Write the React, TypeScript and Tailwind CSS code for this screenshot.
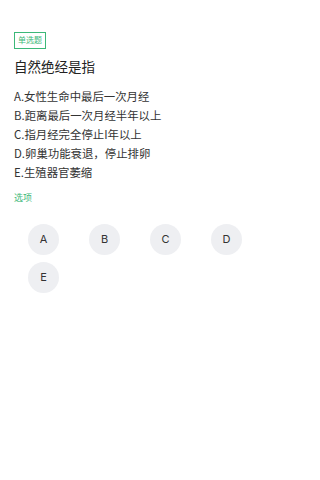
const options = [
  "A.女性生命中最后一次月经",
  "B.距离最后一次月经半年以上",
  "C.指月经完全停止I年以上",
  "D.卵巢功能衰退，停止排卵",
  "E.生殖器官萎缩",
];

const letters = ["A", "B", "C", "D", "E"];

export default function App() {
  return (
    <div
      className="min-h-[480px] w-[270px] bg-white text-[#333]"
      style={{ fontFamily: '"Noto Sans CJK SC", "Noto Sans", sans-serif' }}
    >
      <div className="px-[14px] pt-[24px]">
        {/* Type badge */}
        <span className="inline-block border border-[#3cb878] px-[3px] py-[1.5px] text-[8px] leading-[12px] text-[#3cb878]">
          单选题
        </span>

        {/* Question */}
        <h1 className="mt-[7px] text-[13.5px] leading-[20px] text-[#222]">自然绝经是指</h1>

        {/* Options */}
        <div className="mt-[11px] flex flex-col">
          {options.map((o) => (
            <p key={o} className="text-[11.4px] leading-[19px]">
              {o}
            </p>
          ))}
        </div>

        <p className="mt-[10px] text-[9px] leading-[12px] text-[#3cb878]">选项</p>
      </div>

      {/* Answer buttons */}
      <div className="mt-[20px] grid grid-cols-4 gap-y-[7px] px-[13px]">
        {letters.map((l) => (
          <div key={l} className="flex justify-center">
            <button
              className="flex h-[31px] w-[31px] items-center justify-center rounded-full bg-[#eeeff2] text-[11px] text-[#333]"
              style={{ fontFamily: "Inter, sans-serif" }}
            >
              {l}
            </button>
          </div>
        ))}
      </div>
    </div>
  );
}
